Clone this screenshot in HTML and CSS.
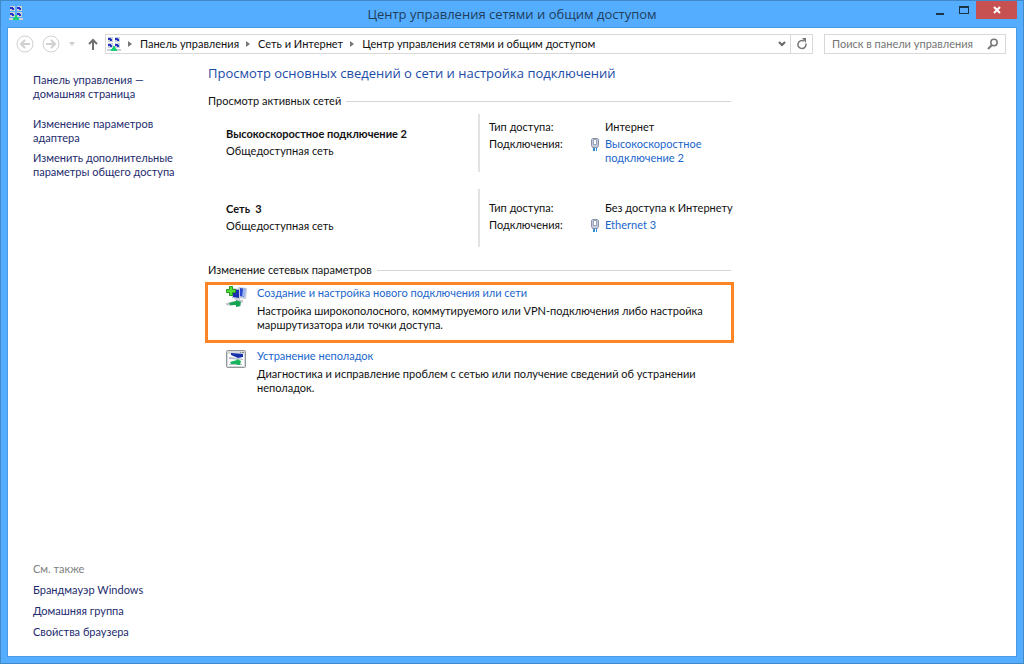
FILE: index.html
```html
<!DOCTYPE html>
<html lang="ru">
<head>
    <meta charset="UTF-8">
    <meta name="viewport" content="width=device-width, initial-scale=1.0">
    <title>Центр управления сетями и общим доступом</title>
    <link rel="stylesheet" href="styles.css">
</head>
<body>
    <!-- общие иконки -->
    <svg class="sprite" aria-hidden="true">
        <symbol id="icon-network" viewBox="0 0 14 15">
            <path fill="#c9d2d4" d="M1 0h5v5H1zM8 0h5v5H8zM1 6h5v5H1zM8 6h5v5H8zM0 12h14v2H0z"/>
            <path fill="#2733c4" d="M1 1h3v1h1v2H3V3H1zM8 1h3v1h1v2h-2V3H8zM1 7h3v1h1v2H3V9H1zM8 7h3v1h1v2h-2V9H8z"/>
            <path fill="#18cf74" d="M6 9h2v2h1v1h1v2H4v-2h1v-1h1z"/>
        </symbol>
        <symbol id="icon-plug" viewBox="0 0 10 15">
            <path fill="#c3cbdc" stroke="#8791a8" d="M1.5 2.5l1-1h5l1 1v6l-1 2h-5l-1-2z"/>
            <path fill="#fff" stroke="#9aa4bd" d="M3.5 2.5h3v5h-3z"/>
            <path fill="#2f8fd0" d="M3 11h2v3H3zM6 11h1v3H6z"/>
        </symbol>
    </svg>

    <div class="window">
        <header class="titlebar">
            <svg class="app-icon"><use href="#icon-network"/></svg>
            <h1>Центр управления сетями и общим доступом</h1>
            <div class="window-buttons">
                <button type="button" aria-label="Свернуть">
                    <svg width="10" height="12"><path fill="#1c3247" d="M1 9h8v2H1z"/></svg>
                </button>
                <button type="button" aria-label="Развернуть">
                    <svg width="10" height="12"><path fill="#1c3247" fill-rule="evenodd" d="M0 2h10v8H0zM1 4v5h8V4z"/></svg>
                </button>
                <button type="button" class="close" aria-label="Закрыть">
                    <svg width="10" height="10"><path stroke="#fff" stroke-width="2" d="M2 2l6 6M8 2L2 8"/></svg>
                </button>
            </div>
        </header>

        <div class="client">
            <nav class="toolbar">
                <button type="button" class="round" aria-label="Назад">
                    <svg width="18" height="18" fill="none" stroke="#d0d0d0"><circle cx="9" cy="9" r="8"/><path stroke-width="2" d="M14 9H5M9 5L5 9l4 4"/></svg>
                </button>
                <button type="button" class="round" aria-label="Вперед">
                    <svg width="18" height="18" fill="none" stroke="#d0d0d0"><circle cx="9" cy="9" r="8"/><path stroke-width="2" d="M4 9h9M9 5l4 4-4 4"/></svg>
                </button>
                <button type="button" class="history" aria-label="Последние расположения">
                    <svg width="8" height="4"><path fill="#cfcfcf" d="M1 0h6L4 4z"/></svg>
                </button>
                <button type="button" class="up" aria-label="Вверх">
                    <svg width="10" height="12" fill="none" stroke="#707070" stroke-width="2"><path d="M5 12V2M1 6l4-4 4 4"/></svg>
                </button>
                <div class="address">
                    <svg class="address-icon"><use href="#icon-network"/></svg>
                    <ol class="crumbs">
                        <li><a href="#">Панель управления</a></li>
                        <li><a href="#">Сеть и Интернет</a></li>
                        <li><a href="#">Центр управления сетями и общим доступом</a></li>
                    </ol>
                    <button type="button" class="drop" aria-label="Предыдущие расположения">
                        <svg width="8" height="6" fill="none" stroke="#666" stroke-width="2"><path d="M1 1l3 3 3-3"/></svg>
                    </button>
                    <button type="button" class="refresh" aria-label="Обновить">
                        <svg width="10" height="12" fill="none" stroke="#777" stroke-width="1.5"><path d="M8.8 5.5a4 4 0 1 1-2-2.5"/><path fill="#777" stroke="none" d="M5 0h4v5z"/></svg>
                    </button>
                </div>
                <form class="search">
                    <input type="text" placeholder="Поиск в панели управления" aria-label="Поиск в панели управления">
                    <button type="submit" aria-label="Найти">
                        <svg width="12" height="12" fill="none" stroke="#777"><circle cx="7" cy="4.5" r="3.2" stroke-width="1.5"/><path stroke-width="2" d="M5 7l-4 4"/></svg>
                    </button>
                </form>
            </nav>

            <div class="columns">
                <aside class="sidebar">
                    <a class="home" href="#">Панель управления — домашняя страница</a>
                    <a href="#">Изменение параметров адаптера</a>
                    <a href="#">Изменить дополнительные параметры общего доступа</a>
                    <div class="see-also">
                        <p>См. также</p>
                        <a href="#">Брандмауэр Windows</a>
                        <a href="#">Домашняя группа</a>
                        <a href="#">Свойства браузера</a>
                    </div>
                </aside>

                <main class="content">
                    <h2>Просмотр основных сведений о сети и настройка подключений</h2>

                    <section class="networks">
                        <h3>Просмотр активных сетей</h3>
                        <div class="network">
                            <div class="network-name">
                                <b>Высокоскоростное подключение 2</b>
                                <span>Общедоступная сеть</span>
                            </div>
                            <dl>
                                <dt>Тип доступа:</dt>
                                <dd class="access">Интернет</dd>
                                <dt>Подключения:</dt>
                                <dd class="connection">
                                    <svg><use href="#icon-plug"/></svg>
                                    <a href="#">Высокоскоростное подключение 2</a>
                                </dd>
                            </dl>
                        </div>
                        <div class="network">
                            <div class="network-name">
                                <b>Сеть&nbsp; 3</b>
                                <span>Общедоступная сеть</span>
                            </div>
                            <dl>
                                <dt>Тип доступа:</dt>
                                <dd class="access">Без доступа к Интернету</dd>
                                <dt>Подключения:</dt>
                                <dd class="connection">
                                    <svg><use href="#icon-plug"/></svg>
                                    <a href="#">Ethernet 3</a>
                                </dd>
                            </dl>
                        </div>
                    </section>

                    <section>
                        <h3>Изменение сетевых параметров</h3>
                        <div class="task highlighted">
                            <svg width="22" height="22" viewBox="0 0 22 22">
                                <path fill="#c3ccd8" d="M7 2l8 1v11l-8-2zM13 1l9 1-1 11-7-1z"/>
                                <path fill="#1c2fb4" d="M8 3l6 1v8l-6-1z"/>
                                <path fill="#2b48cf" d="M15 2l5 1-1 8-4-1z"/>
                                <path fill="#9db8f0" d="M18 3l3 0-1 7-3 1z"/>
                                <path fill="#c5cacf" d="M9 13l9 1v2l-6-1zM1 17l14-3 4 2-13 4-5-1zM10 19l6-1v2l-4 1z"/>
                                <path fill="#15a552" d="M4 17l7-2V14l5 2-1 4-4 1v-2l-6 0z"/>
                                <path fill="#55dc38" stroke="#249b20" d="M4.5.5h3v3h3v3h-3v3h-3v-3h-3v-3h3z"/>
                            </svg>
                            <div>
                                <a href="#">Создание и настройка нового подключения или сети</a>
                                <p>Настройка широкополосного, коммутируемого или VPN-подключения либо настройка маршрутизатора или точки доступа.</p>
                            </div>
                        </div>
                        <div class="task">
                            <svg width="22" height="22" viewBox="0 0 22 22">
                                <rect x="1.5" y="1.5" width="19" height="17" rx="1" fill="#d5d9db" stroke="#92979a"/>
                                <path fill="#fff" d="M3 5h16v12H3z"/>
                                <path fill="#7f8790" d="M15 3h1v1h-1zM17 3h2v1h-2z"/>
                                <path fill="#1730ab" d="M6 4l12 1v3l-5 1-7-3z"/>
                                <path fill="#b9c0cb" d="M4 8l9 1 5 1v1L4 10zM4 15h13v1H4z"/>
                                <path fill="#17b45c" d="M5 13l7-2v-1l4 2-1 4-3 0v-1l-6 0z"/>
                            </svg>
                            <div>
                                <a href="#">Устранение неполадок</a>
                                <p>Диагностика и исправление проблем с сетью или получение сведений об устранении неполадок.</p>
                            </div>
                        </div>
                    </section>
                </main>
            </div>
        </div>
    </div>
</body>
</html>
```
FILE: styles.css
```css
* {
    box-sizing: border-box;
}
body {
    margin: 0;
    font-family: Lato, "Open Sans", sans-serif;
    font-size: 11px;
    line-height: 14px;
    color: #111;
}
h1, h2, h3, p, dl, dd, ol {
    margin: 0;
    padding: 0;
    font-weight: normal;
}
a {
    color: #1a66cc;
    text-decoration: none;
}
a:hover {
    text-decoration: underline;
}
button {
    display: flex;
    align-items: center;
    justify-content: center;
    padding: 0;
    border: none;
    background: none;
}
svg {
    display: block;
    flex: none;
}
.sprite {
    display: none;
}

/* окно */
.window {
    display: flex;
    flex-direction: column;
    min-height: 100vh;
    padding: 0 6px 6px;
    border: 1px solid #4289c9;
    background: #54adff;
}
.titlebar {
    display: grid;
    grid-template-columns: 1fr auto 1fr;
    height: 26px;
}
.titlebar h1 {
    font-family: "Open Sans", sans-serif;
    font-size: 13px;
    line-height: 26px;
    color: #1f3d5c;
}
.app-icon {
    width: 14px;
    height: 15px;
    margin: 5px 2px;
}
.window-buttons {
    display: flex;
    justify-content: flex-end;
}
.window-buttons button {
    width: 24px;
    height: 18px;
}
.window-buttons .close {
    width: 41px;
    background: #c75050;
}
.client {
    flex: 1;
    display: flex;
    flex-direction: column;
    border: 1px solid #4a9be6;
    background: #fff;
}

/* адресная строка */
.toolbar {
    display: flex;
    align-items: center;
    height: 32px;
    padding: 0 10px 0 8px;
}
.round {
    width: 18px;
    margin-right: 8px;
}
.history {
    width: 8px;
}
.up {
    width: 10px;
    margin: 0 7px 0 12px;
}
.address, .search {
    display: flex;
    align-items: center;
    height: 20px;
    border: 1px solid #d9d9d9;
}
.address {
    flex: 1;
    margin-right: 11px;
}
.address-icon {
    width: 14px;
    height: 15px;
    margin-left: 1px;
}
.crumbs {
    flex: 1;
    display: flex;
    list-style: none;
}
.crumbs li {
    display: flex;
    align-items: center;
}
.crumbs li::before {
    content: "";
    margin: 0 8px 0 7px;
    border: 3px solid transparent;
    border-left: 4px solid #777;
    border-right: 0;
}
.crumbs a {
    color: #111;
}
.drop {
    width: 16px;
}
.refresh {
    width: 22px;
    height: 18px;
    border-left: 1px solid #d9d9d9;
}
.search {
    width: 182px;
}
.search input {
    flex: 1;
    min-width: 0;
    padding: 0 0 0 7px;
    border: none;
    outline: none;
    font: inherit;
}
.search input::placeholder {
    color: #757575;
    opacity: 1;
}
.search button {
    width: 24px;
}

/* содержимое */
.columns {
    flex: 1;
    display: flex;
}
.sidebar {
    display: flex;
    flex-direction: column;
    gap: 6px;
    width: 200px;
    padding: 13px 24px 17px 25px;
}
.sidebar a {
    color: #1e2b6e;
}
.sidebar .home {
    margin-bottom: 10px;
}
.see-also {
    display: flex;
    flex-direction: column;
    gap: 7px;
    margin-top: auto;
}
.see-also p {
    color: #808080;
}
.content {
    flex: 1;
    max-width: 523px;
}
.content h2 {
    margin: 3px 0 11px;
    font-family: "Open Sans", sans-serif;
    font-size: 13px;
    line-height: 20px;
    color: #1c4ba8;
}
.content h3 {
    display: flex;
    align-items: center;
    gap: 5px;
    font-size: 11px;
}
.content h3::after {
    content: "";
    flex: 1;
    border-top: 1px solid #d5d5d5;
}
.networks {
    margin-bottom: 16px;
}
.network {
    display: flex;
    align-items: center;
    margin-top: 17px;
}
.networks h3 + .network {
    margin-top: 6px;
}
.network-name {
    flex: 1;
    display: flex;
    flex-direction: column;
    gap: 3px;
    padding: 0 0 2px 18px;
}
.network dl {
    display: grid;
    grid-template-columns: 116px 1fr;
    align-content: center;
    gap: 3px 0;
    width: 253px;
    min-height: 58px;
    padding: 0 0 2px 9px;
    border-left: 2px solid #e2e2e2;
}
.access {
    white-space: nowrap;
}
.connection {
    display: flex;
    gap: 5px;
    margin-left: -15px;
}
.connection svg {
    width: 10px;
    height: 15px;
}
.task {
    display: flex;
    gap: 10px;
    padding: 6px 5px 9px 17px;
}
.task p {
    margin-top: 4px;
}
.highlighted {
    margin: 5px -3px 0;
    padding: 1px 5px 8px 17px;
    border: 3px solid #ff8426;
}
```
